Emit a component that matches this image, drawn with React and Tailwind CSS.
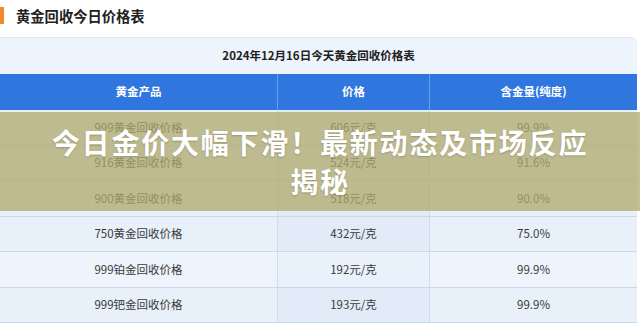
import React from 'react'

const rows = [
  ['999黄金回收价格', '606元/克', '99.9%'],
  ['916黄金回收价格', '524元/克', '91.6%'],
  ['900黄金回收价格', '518元/克', '90.0%'],
  ['750黄金回收价格', '432元/克', '75.0%'],
  ['999铂金回收价格', '192元/克', '99.9%'],
  ['999钯金回收价格', '193元/克', '99.9%'],
]

function App() {
  return (
    <div className="relative w-[640px] h-[325px] overflow-hidden bg-white font-['Noto_Sans_CJK_SC',sans-serif] text-[#333]">
      {/* Title */}
      <div className="flex items-start pt-[7px] h-[37px]">
        <div className="w-[4px] h-[17px] bg-[#f08a2a]" />
        <h1 className="ml-[12px] text-[14.3px] leading-[17px] font-bold text-[#222]">黄金回收今日价格表</h1>
      </div>

      {/* Table */}
      <div className="w-[637px] border-t border-[#dbe3ee] rounded-tr-[6px] overflow-hidden">
        <div className="h-[36px] bg-[#eef4fc] flex items-center justify-center text-[11.5px] font-bold text-[#222]">
          2024年12月16日今天黄金回收价格表
        </div>
        <div className="grid grid-cols-[278px_152px_207px] h-[36px] bg-[#2f76df] text-white text-[11.5px] font-bold">
          <div className="flex items-center justify-center border-r border-[#6a9eea]">黄金产品</div>
          <div className="flex items-center justify-center border-r border-[#6a9eea]">价格</div>
          <div className="flex items-center justify-center">含金量(纯度)</div>
        </div>
        {rows.map((r, i) => (
          <div
            key={i}
            className={`grid grid-cols-[278px_152px_207px] h-[35.5px] border-b border-[#cbd8ea] text-[11.5px] text-[#3a3a3a] ${i === 4 ? 'bg-[#eef4fc]' : 'bg-[#e8f0fa]'}`}
          >
            <div className="flex items-center justify-center border-r border-[#cfdcec]">{r[0]}</div>
            <div className={`flex items-center justify-center border-r border-[#cfdcec] ${i === 4 ? 'bg-[#e9f1fb]' : 'bg-[#e2ecf9]'}`}>{r[1]}</div>
            <div className="flex items-center justify-center">{r[2]}</div>
          </div>
        ))}
      </div>

      {/* Headline overlay */}
      <div className="absolute left-0 top-[112px] w-full h-[99px] bg-[#b0aa6c]/75 flex items-center justify-center">
        <p className="text-white font-bold text-[28px] leading-[39px] tracking-[1.8px] text-center [text-shadow:0_1px_2px_rgba(0,0,0,0.2)]">
          今日金价大幅下滑！最新动态及市场反应
          <br />
          揭秘
        </p>
      </div>
    </div>
  )
}

export default App
